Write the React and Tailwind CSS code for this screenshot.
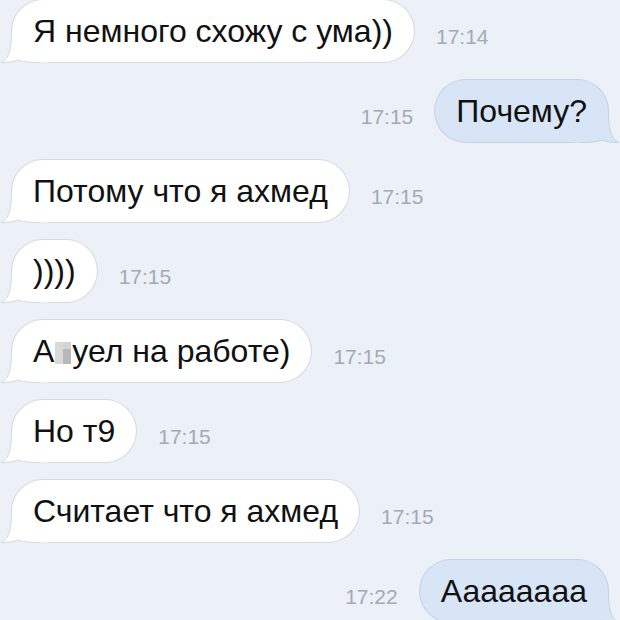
import React from "react";

const messages = [
  { out: false, text: "Я немного схожу с ума))", time: "17:14" },
  { out: true, text: "Почему?", time: "17:15" },
  { out: false, text: "Потому что я ахмед", time: "17:15" },
  { out: false, text: "))))", time: "17:15" },
  { out: false, text: "censored", time: "17:15" },
  { out: false, text: "Но т9", time: "17:15" },
  { out: false, text: "Считает что я ахмед", time: "17:15" },
  { out: true, text: "Аааааааа", time: "17:22" },
];

// Хвостик пузыря (рисуется поверх угла)
function Tail({ out }) {
  const fill = out ? "#d7e5f7" : "#ffffff";
  const stroke = out ? "#c3d2e6" : "#d3d9e2";
  return (
    <svg
      width="48"
      height="34"
      viewBox="0 0 48 34"
      className={`absolute bottom-[-2px] overflow-visible ${out ? "right-[-12px] -scale-x-100" : "left-[-12px]"}`}
    >
      <path
        d="M11.5 0 C11.5 20 9 28.5 1 32.5 Q12 32.5 18 30 Q24 32.5 40 32.5 L48 32.5 L48 0 Z"
        fill={fill}
      />
      <path
        d="M11.5 0 C11.5 20 9 28.5 1 32.5 Q12 32.5 18 30 Q24 32.5 40 32.5"
        fill="none"
        stroke={stroke}
        strokeWidth="1"
      />
    </svg>
  );
}

function Censored() {
  return (
    <span className="inline-flex w-[16px] h-[22px] mx-[1px] align-[-2px]">
      <span className="w-1/2 h-full bg-[#d9d9d9]" />
      <span className="w-1/2 h-full flex flex-col">
        <span className="h-1/3 bg-[#d4d4d4]" />
        <span className="h-2/3 bg-[#b8b8b8]" />
      </span>
    </span>
  );
}

function Bubble({ out, text }) {
  return (
    <div
      className={`relative h-[62px] flex items-center px-[21px] rounded-[31px] ${
        out
          ? "bg-[#d7e5f7] shadow-[0_0_0_1px_#c3d2e6]"
          : "bg-white shadow-[0_0_0_1px_#d3d9e2]"
      }`}
    >
      <Tail out={out} />
      <span className="relative text-[32px] text-[#111] whitespace-nowrap">
        {text === "censored" ? (
          <>
            А<Censored />уел на работе)
          </>
        ) : (
          text
        )}
      </span>
    </div>
  );
}

export default function App() {
  return (
    <div className="w-[620px] h-[620px] overflow-hidden bg-[#ecf1f8] px-[12px] flex flex-col gap-[18px] font-['Liberation_Sans',Arial,sans-serif]">
      {messages.map((m, i) => (
        <div
          key={i}
          className={`flex items-center gap-[22px] ${m.out ? "justify-end" : "justify-start"}`}
        >
          {m.out && (
            <span className="mt-3 text-[21px] text-[#a3aab3]">{m.time}</span>
          )}
          <Bubble out={m.out} text={m.text} />
          {!m.out && (
            <span className="mt-3 text-[21px] text-[#a3aab3]">{m.time}</span>
          )}
        </div>
      ))}
    </div>
  );
}
